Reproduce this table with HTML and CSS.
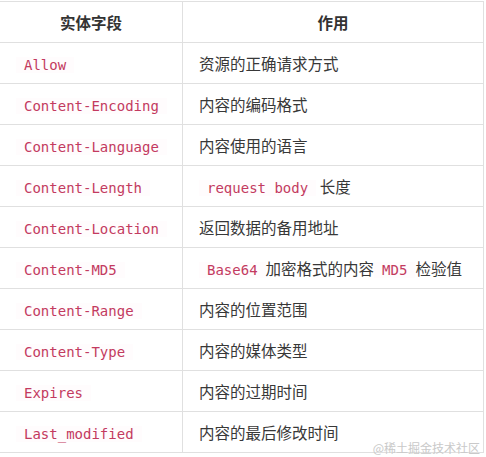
FILE: index.html
```html
<!DOCTYPE html>
<html lang="zh-CN">
<head>
<meta charset="utf-8">
<title>实体字段</title>
<link rel="stylesheet" href="styles.css">
</head>
<body>
<div class="page">
  <table class="fields">
    <thead>
      <tr><th class="c1">实体字段</th><th class="c2">作用</th></tr>
    </thead>
    <tbody>
      <tr><td><code>Allow</code></td><td>资源的正确请求方式</td></tr>
      <tr><td><code>Content-Encoding</code></td><td>内容的编码格式</td></tr>
      <tr><td><code>Content-Language</code></td><td>内容使用的语言</td></tr>
      <tr><td><code>Content-Length</code></td><td><code>request body</code> 长度</td></tr>
      <tr><td><code>Content-Location</code></td><td>返回数据的备用地址</td></tr>
      <tr><td><code>Content-MD5</code></td><td><code>Base64</code>加密格式的内容<code>MD5</code>检验值</td></tr>
      <tr><td><code>Content-Range</code></td><td>内容的位置范围</td></tr>
      <tr><td><code>Content-Type</code></td><td>内容的媒体类型</td></tr>
      <tr><td><code>Expires</code></td><td>内容的过期时间</td></tr>
      <tr><td><code>Last_modified</code></td><td>内容的最后修改时间</td></tr>
    </tbody>
  </table>
  <div class="watermark">@稀土掘金技术社区</div>
</div>
</body>
</html>
```

FILE: styles.css
```css
html, body {
  margin: 0;
  padding: 0;
  background: #ffffff;
}

.page {
  position: relative;
  padding-top: 1px;
  width: 486px;
  height: 456px;
  font-family: "Noto Sans CJK SC", "Noto Sans", sans-serif;
  font-size: 15.5px;
  color: #383838;
}

.fields {
  border-collapse: collapse;
  width: 484px;
  table-layout: fixed;
}

.fields th,
.fields td {
  border: 1px solid #e0e0e0;
  padding: 0 16px;
  height: 40px;
  line-height: 20px;
  text-align: left;
  vertical-align: middle;
  white-space: nowrap;
}

.fields tr > :first-child {
  border-left: none;
}

.fields th {
  font-weight: bold;
  text-align: center;
  color: #333333;
}

.fields .c1 {
  width: 150px;
}

.fields code {
  font-family: "DejaVu Sans Mono", monospace;
  font-size: 14px;
  line-height: 1;
  color: #c33a60;
  background: #fffcfd;
  padding: 0 8px;
}

.watermark {
  position: absolute;
  right: 6px;
  bottom: 2px;
  font-size: 12px;
  color: #c9c9c9;
  font-family: "Noto Sans CJK SC", sans-serif;
  line-height: 14px;
}
```
